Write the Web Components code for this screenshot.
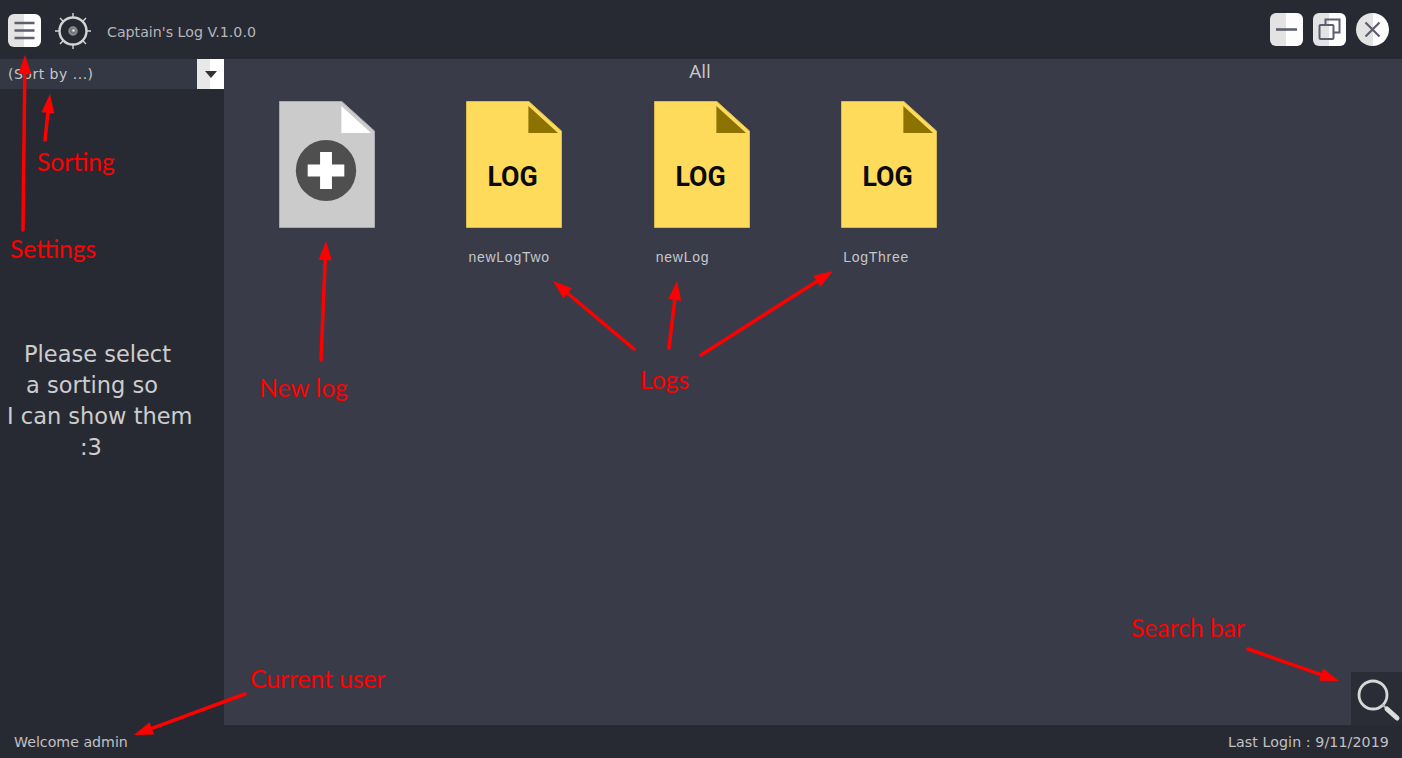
<!DOCTYPE html>
<html>
<head>
<meta charset="utf-8">
<title>Captain's Log</title>
<style>
  html, body { margin: 0; padding: 0; height: 100%; background: #282a33; overflow: hidden; }
</style>
</head>
<body>
<log-app>
  <title-bar slot="top" heading="Captain's Log V.1.0.0"></title-bar>
  <side-panel slot="side"></side-panel>
  <log-grid slot="main"></log-grid>
  <status-bar slot="bottom"></status-bar>
</log-app>
<script>
class LogApp extends HTMLElement {
    constructor() {
        super();
        this.attachShadow({ mode: "open" });
        this.shadowRoot.innerHTML = `
            <style>
                :host {
                    display: grid;
                    position: relative;
                    width: 1402px;
                    height: 758px;
                    grid-template-columns: 224px 1fr;
                    grid-template-rows: 59px 1fr 33px;
                    background: #282a33;
                    font-family: "DejaVu Sans", sans-serif;
                    overflow: hidden;
                }
                ::slotted([slot=top]), ::slotted([slot=bottom]) { grid-column: 1 / 3; }
            </style>
            <slot name="top"></slot>
            <slot name="side"></slot>
            <slot name="main"></slot>
            <slot name="bottom"></slot>
            <note-layer></note-layer>
        `;
    }
}

class TitleBar extends HTMLElement {
    constructor() {
        super();
        this.attachShadow({ mode: "open" });
    }

    connectedCallback() {
        this.shadowRoot.innerHTML = `
            <style>
                :host {
                    display: flex;
                    align-items: center;
                    background: #282a33;
                    padding: 0 13px 0 8px;
                }
                .btn {
                    width: 33px;
                    height: 33px;
                    border-radius: 6px;
                    background: linear-gradient(90deg, #e3e3e4 50%, #fdfdfd 50%);
                    display: flex;
                    align-items: center;
                    justify-content: center;
                    margin-top: 2px;
                }
                .round { border-radius: 50%; }
                .wheel { margin: 2px 0 0 13px; }
                .name { margin: 4px 0 0 15px; color: #b4b6bb; font-size: 14.200px; flex: 1; }
                .win { display: flex; gap: 10px; margin-top: -2px; }
                svg { display: block; }
            </style>
            <div class="btn">
                <svg width="25" height="25" viewBox="0 0 25 25" stroke="#5d5f6e" stroke-width="2.600" fill="none">
                    <path d="M2.500 5h20M2.500 12.500h20M2.500 20h20"/>
                </svg>
            </div>
            <svg class="wheel" width="38" height="38" viewBox="0 0 38 38" fill="none" stroke="#d4d4d4">
                <circle cx="19" cy="19" r="13.500" stroke-width="2.400"/>
                <circle cx="19" cy="19" r="4" fill="#77787c" stroke="#8d8e92" stroke-width="1.400"/>
                <circle cx="19.500" cy="18.500" r="1.300" fill="#e4e4e4" stroke="none"/>
                <path stroke-width="1.400" d="M19 1v5M19 32v5M1 19h5M32 19h5M6 6l3.400 3.400M32 6l-3.400 3.400M6 32l3.400-3.400M32 32l-3.400-3.400"/>
            </svg>
            <span class="name">${this.getAttribute("heading")}</span>
            <div class="win">
                <div class="btn">
                    <svg width="25" height="25" viewBox="0 0 25 25"><path d="M2 12.500h21" stroke="#5d5f6e" stroke-width="2.600"/></svg>
                </div>
                <div class="btn">
                    <svg width="25" height="25" viewBox="0 0 25 25" fill="none" stroke="#5d5f6e" stroke-width="2">
                        <path d="M8.500 7V2.500h14V15.500H17"/>
                        <rect x="2.500" y="8" width="14" height="14" rx="1"/>
                    </svg>
                </div>
                <div class="btn round">
                    <svg width="25" height="25" viewBox="0 0 25 25"><path d="M5.500 5.500l14 14M19.500 5.500l-14 14" stroke="#5d5f6e" stroke-width="2.200"/></svg>
                </div>
            </div>
        `;
    }
}

class SidePanel extends HTMLElement {
    constructor() {
        super();
        this.attachShadow({ mode: "open" });
        this.shadowRoot.innerHTML = `
            <style>
                :host { display: flex; flex-direction: column; background: #282a33; }
                .sort {
                    display: flex;
                    height: 30px;
                    align-items: center;
                    justify-content: space-between;
                    background: #343744;
                    color: #c8c8c8;
                    font-size: 14px;
                    letter-spacing: 0.500px;
                    padding-left: 8px;
                }
                .drop {
                    width: 27px;
                    height: 30px;
                    background: linear-gradient(90deg, #e8e8e8 50%, #fff 50%);
                    display: flex;
                    align-items: center;
                    justify-content: center;
                }
                .drop i { border: 6px solid transparent; border-top: 7px solid #333; border-bottom: 0; }
                .hint {
                    margin-top: 250px;
                    color: #cdcdcd;
                    font-size: 22.500px;
                    line-height: 31px;
                    white-space: nowrap;
                }
                .hint div:nth-child(1) { padding-left: 24px; }
                .hint div:nth-child(2) { padding-left: 26px; }
                .hint div:nth-child(3) { padding-left: 7px; }
                .hint div:nth-child(4) { padding-left: 80px; }
            </style>
            <div class="sort"><span>(Sort by ...)</span><div class="drop"><i></i></div></div>
            <div class="hint">
                <div>Please select</div>
                <div>a sorting so</div>
                <div>I can show them</div>
                <div>:3</div>
            </div>
        `;
    }
}

class LogFile extends HTMLElement {
    constructor() {
        super();
        this.attachShadow({ mode: "open" });
    }

    connectedCallback() {
        const isNew = this.hasAttribute("new");
        const body = isNew ? "#cbcbcb" : "#ffdb5c";
        const fold = isNew ? "#ffffff" : "#8c7200";
        const inner = isNew
            ? `<circle cx="47.500" cy="69.500" r="30.500" fill="#4f4f4f"/>
               <path d="M41.500 51h12v12.500H66v12H53.500V88h-12V75.500H29v-12h12.500z" fill="#fff"/>`
            : `<text x="47" y="85" text-anchor="middle">LOG</text>`;
        this.shadowRoot.innerHTML = `
            <style>
                :host { display: flex; flex-direction: column; width: 187.400px; }
                svg { display: block; width: 96px; height: 127px; }
                text { font: 700 27px Roboto, sans-serif; fill: #0a0a0a; }
                .label {
                    height: 16px;
                    margin: 21px 0 0 2px;
                    color: #c6c7ca;
                    font: 14px "Liberation Sans", sans-serif;
                    letter-spacing: 0.750px;
                }
            </style>
            <svg viewBox="0 0 97 127" preserveAspectRatio="none">
                <path d="M0.500 0.500H63.500L96.500 30V126.500H0.500z" fill="${body}" stroke="${isNew ? "#a9aab0" : "#d9bb50"}"/>
                <path d="M63 5V32H93z" fill="${fold}"/>
                ${inner}
            </svg>
            <span class="label"><slot></slot></span>
        `;
    }
}

class LogGrid extends HTMLElement {
    constructor() {
        super();
        this.attachShadow({ mode: "open" });
        this.shadowRoot.innerHTML = `
            <style>
                :host { display: block; position: relative; background: #393b49; }
                h2 {
                    margin: 0;
                    height: 42px;
                    box-sizing: border-box;
                    text-align: center;
                    font: 400 19px/25px "Open Sans", sans-serif;
                    color: #c9c9cb;
                    padding-right: 226px;
                }
                .files { display: flex; padding-left: 55px; }
                .search {
                    position: absolute;
                    right: 0;
                    bottom: 0;
                    width: 51px;
                    height: 53px;
                    background: #2a2c36;
                }
                .search svg { display: block; }
            </style>
            <h2>All</h2>
            <div class="files">
                <log-file new></log-file>
                <log-file>newLogTwo</log-file>
                <log-file>newLog</log-file>
                <log-file>LogThree</log-file>
            </div>
            <div class="search">
                <svg width="51" height="53" viewBox="0 0 51 53" fill="none" stroke-linecap="round">
                    <circle cx="22" cy="23" r="14" stroke="#d8d8d8" stroke-width="2.800"/>
                    <path d="M32 33l2 2" stroke="#bbb" stroke-width="2"/>
                    <path d="M36 37l10 9" stroke="#dedede" stroke-width="5"/>
                </svg>
            </div>
        `;
    }
}

class StatusBar extends HTMLElement {
    constructor() {
        super();
        this.attachShadow({ mode: "open" });
        this.shadowRoot.innerHTML = `
            <style>
                :host {
                    display: flex;
                    justify-content: space-between;
                    align-items: center;
                    padding: 0 13px 0 14px;
                    background: #282a33;
                    color: #c0c1c4;
                    font-size: 14.200px;
                }
                .login { letter-spacing: 0.100px; }
            </style>
            <span>Welcome admin</span>
            <span class="login">Last Login : 9/11/2019</span>
        `;
    }
}

// red notes drawn on top of the screenshot
class NoteLayer extends HTMLElement {
    constructor() {
        super();
        this.attachShadow({ mode: "open" });
    }

    connectedCallback() {
        const notes = [
            ["Sorting", 37, 148],
            ["Settings", 10, 235],
            ["New log", 259, 374],
            ["Logs", 640, 366],
            ["Search bar", 1131, 614],
            ["Current user", 250, 665]
        ];
        const arrows = [
            [23, 230, 25, 55],
            [45, 140, 50, 94],
            [321, 360, 326, 241],
            [634, 349, 553, 281],
            [669, 348, 677, 281],
            [701, 355, 833, 271],
            [1248, 649, 1339, 681],
            [245, 694, 134, 735]
        ];
        const lines = arrows.map(([x1, y1, x2, y2]) => {
            const a = Math.atan2(y2 - y1, x2 - x1);
            const back = 19, side = 6.500;
            const bx = x2 - Math.cos(a) * back, by = y2 - Math.sin(a) * back;
            const nx = -Math.sin(a) * side, ny = Math.cos(a) * side;
            return `<path d="M${x1} ${y1}L${bx} ${by}" stroke="#f00" stroke-width="3.500" stroke-linecap="round"/>
                    <path d="M${x2} ${y2}L${bx + nx} ${by + ny}L${bx - nx} ${by - ny}z" fill="#f00"/>`;
        }).join("");
        const labels = notes.map(([text, x, y]) =>
            `<span style="left:${x}px;top:${y}px">${text}</span>`).join("");
        this.shadowRoot.innerHTML = `
            <style>
                :host { position: absolute; inset: 0; pointer-events: none; }
                svg { position: absolute; left: 0; top: 0; }
                span {
                    position: absolute;
                    color: #f00;
                    font: 24.600px/28px Lato, sans-serif;
                    white-space: nowrap;
                }
            </style>
            <svg width="1402" height="758">${lines}</svg>
            ${labels}
        `;
    }
}

customElements.define("log-app", LogApp);
customElements.define("title-bar", TitleBar);
customElements.define("side-panel", SidePanel);
customElements.define("log-file", LogFile);
customElements.define("log-grid", LogGrid);
customElements.define("status-bar", StatusBar);
customElements.define("note-layer", NoteLayer);
</script>
</body>
</html>
